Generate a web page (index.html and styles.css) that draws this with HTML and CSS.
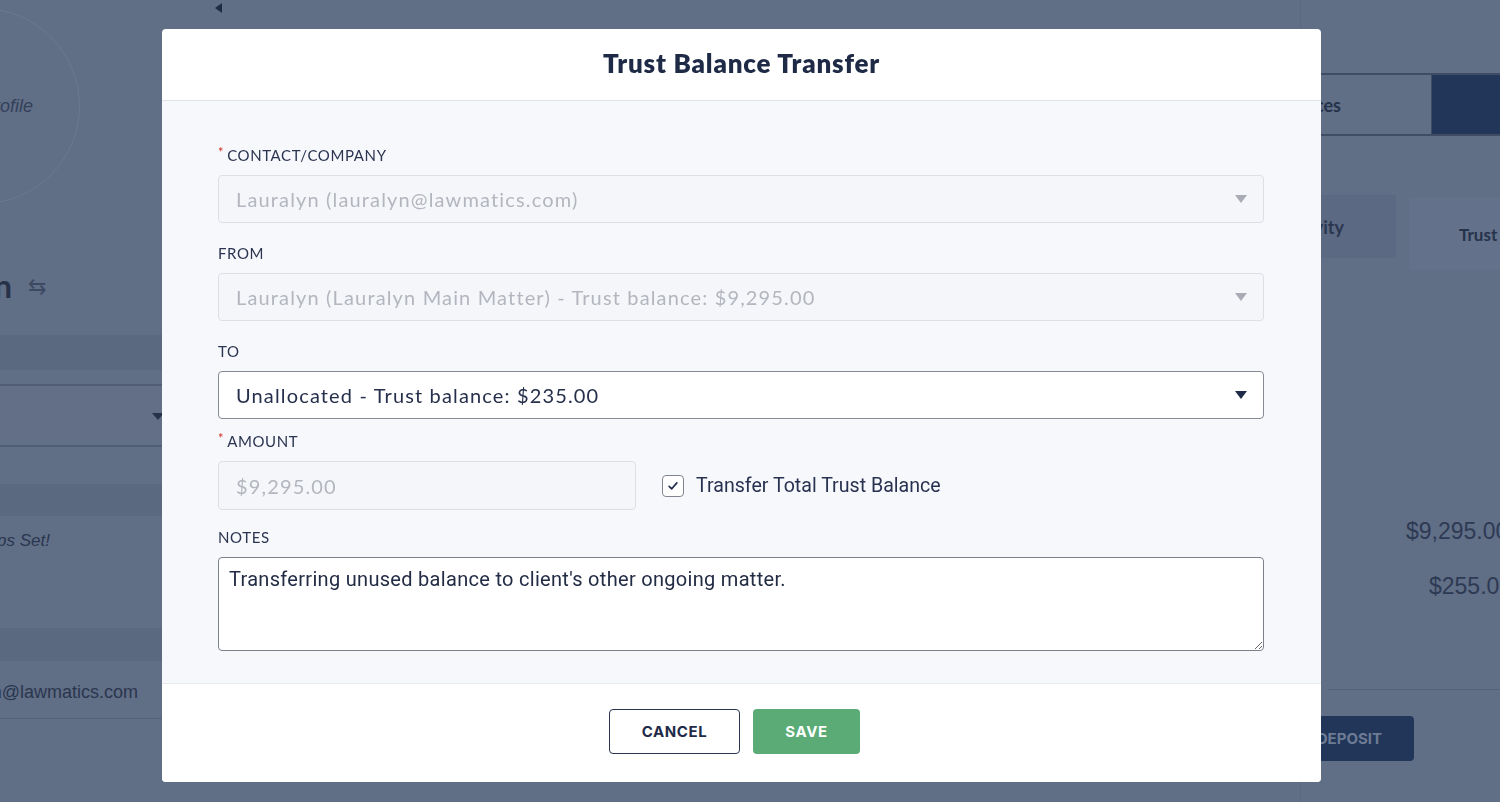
FILE: index.html
```html
<!DOCTYPE html>
<html lang="en">
<head>
<meta charset="utf-8">
<title>Trust Balance Transfer</title>
<link rel="stylesheet" href="styles.css">
</head>
<body>
<div class="page">
  <aside class="left-col">
    <div class="avatar"><span class="avatar-text">Upload Profile</span></div>
    <div class="contact-name"><span>Lauralyn</span><span class="swap">&#8646;</span></div>
    <div class="band band-a"></div>
    <div class="select-row"><span class="bg-caret"></span></div>
    <div class="band band-b"></div>
    <div class="steps"><span>No Steps Set!</span></div>
    <div class="band band-c"></div>
    <div class="email"><span>lauralyn@lawmatics.com</span></div>
    <div class="rule"></div>
  </aside>
  <main class="center-col">
    <span class="collapse"></span>
  </main>
  <aside class="right-col">
    <div class="tabs">
      <div class="tab tab-light"><span>Invoices</span></div>
      <div class="tab tab-dark"></div>
    </div>
    <div class="subtabs">
      <div class="subtab subtab-a"><span>Activity</span></div>
      <div class="subtab subtab-b">Trust</div>
    </div>
    <div class="amount amount-1">$9,295.00</div>
    <div class="amount amount-2">$255.00</div>
    <div class="right-rule"></div>
    <div class="deposit"><span>NEW DEPOSIT</span></div>
  </aside>
</div>

<div class="modal" role="dialog" aria-labelledby="modal-title">
  <header class="modal-header">
    <h1 id="modal-title" class="modal-title">Trust Balance Transfer</h1>
  </header>
  <section class="modal-body">
    <div class="field">
      <label class="label"><span class="req">*</span>CONTACT/COMPANY</label>
      <div class="select disabled"><span class="value">Lauralyn (lauralyn@lawmatics.com)</span><span class="caret"></span></div>
    </div>
    <div class="field">
      <label class="label">FROM</label>
      <div class="select disabled"><span class="value">Lauralyn (Lauralyn Main Matter) - Trust balance: $9,295.00</span><span class="caret"></span></div>
    </div>
    <div class="field field-to">
      <label class="label">TO</label>
      <div class="select active"><span class="value">Unallocated - Trust balance: $235.00</span><span class="caret"></span></div>
    </div>
    <div class="field field-amount">
      <label class="label"><span class="req">*</span>AMOUNT</label>
      <div class="amount-row">
        <div class="input disabled">$9,295.00</div>
        <label class="check">
          <span class="box"><svg viewBox="0 0 20 20" width="14" height="14"><path d="M4.5 10.5 L8.2 14 L15.5 5.5" fill="none" stroke="#1f2b48" stroke-width="2.4" stroke-linecap="round" stroke-linejoin="round"/></svg></span>
          <span class="check-text">Transfer Total Trust Balance</span>
        </label>
      </div>
    </div>
    <div class="field field-notes">
      <label class="label">NOTES</label>
      <textarea class="notes">Transferring unused balance to client's other ongoing matter.</textarea>
    </div>
  </section>
  <footer class="modal-footer">
    <button class="btn btn-cancel">CANCEL</button>
    <button class="btn btn-save">SAVE</button>
  </footer>
</div>
</body>
</html>
```

FILE: styles.css
```css
* { box-sizing: border-box; }
html, body { margin: 0; padding: 0; }
body {
  width: 1500px;
  height: 802px;
  overflow: hidden;
  background: #606e86;
  font-family: "Lato", "Noto Sans", sans-serif;
  color: #1f2b48;
}

/* ---------- dimmed page behind the modal ---------- */
.page {
  display: grid;
  grid-template-columns: 170px 1130px 200px;
  height: 802px;
}
.left-col {
  overflow: hidden;
  display: flex;
  flex-direction: column;
}
.avatar {
  width: 196px;
  height: 196px;
  margin: 8px 0 0 -116px;
  border-radius: 50%;
  border: 1.5px solid #6c798f;
  display: flex;
  align-items: center;
  justify-content: flex-end;
  padding: 0 46px 0 0;
  flex: none;
}
.avatar-text {
  font-family: "Liberation Sans", sans-serif;
  font-style: italic;
  font-size: 18px;
  color: #34405a;
  white-space: nowrap;
}
.contact-name {
  margin-top: 61px;
  height: 40px;
  display: flex;
  align-items: center;
  justify-content: flex-end;
  gap: 16px;
  padding-right: 124px;
  white-space: nowrap;
  font-size: 32px;
  font-weight: 700;
  color: #27324a;
}
.swap { font-size: 22px; font-weight: 400; color: #3d4962; }
.band { background: #5a6880; flex: none; }
.band-a { margin-top: 30px; height: 35px; }
.select-row {
  margin-top: 14px;
  height: 63px;
  border-top: 2px solid #4f5d75;
  border-bottom: 2px solid #4f5d75;
  background: #636f87;
  position: relative;
  flex: none;
}
.bg-caret {
  position: absolute;
  right: 6px;
  top: 27px;
  border-left: 6px solid transparent;
  border-right: 6px solid transparent;
  border-top: 7px solid #26324a;
}
.band-b { margin-top: 37px; height: 32px; }
.steps {
  margin-top: 15px;
  height: 20px;
  line-height: 20px;
  display: flex;
  justify-content: flex-end;
  padding-right: 120px;
  white-space: nowrap;
  font-family: "Liberation Sans", sans-serif;
  font-style: italic;
  font-size: 17px;
  color: #2b364e;
}
.steps span, .email span, .tab-light span, .subtab-a span, .deposit span { flex: none; }
.band-c { margin-top: 77px; height: 33px; }
.email {
  margin-top: 21px;
  height: 20px;
  line-height: 20px;
  display: flex;
  justify-content: flex-end;
  padding-right: 32px;
  white-space: nowrap;
  font-family: "Liberation Sans", sans-serif;
  font-size: 18px;
  color: #2b364e;
}
.rule { margin-top: 16px; border-top: 1px solid #55627a; }

.center-col { position: relative; }
.collapse {
  display: block;
  width: 0;
  height: 0;
  margin: 3px 0 0 45px;
  border-top: 5px solid transparent;
  border-bottom: 5px solid transparent;
  border-right: 7px solid #1f2b44;
}

.right-col {
  overflow: hidden;
  display: flex;
  flex-direction: column;
  border-left: 1px solid #5b6880;
}
.tabs {
  margin-top: 73px;
  height: 63px;
  display: flex;
  border-top: 2px solid #3f4c64;
  border-bottom: 2px solid #3f4c64;
  flex: none;
}
.tab-light {
  width: 131px;
  display: flex;
  align-items: center;
  justify-content: flex-end;
  padding-right: 90px;
  white-space: nowrap;
  font-size: 18px;
  font-weight: 700;
  color: #26324b;
  border-right: 1px solid #3f4c64;
}
.tab-dark { flex: 1; background: #22365a; }
.subtabs {
  margin-top: 59px;
  display: flex;
  align-items: flex-start;
  gap: 13px;
  flex: none;
}
.subtab-a {
  width: 95px;
  height: 63px;
  background: #5b6982;
  display: flex;
  align-items: center;
  justify-content: flex-end;
  padding-right: 52px;
  white-space: nowrap;
  font-size: 18px;
  font-weight: 700;
  color: #2b3750;
}
.subtab-b {
  flex: 1;
  height: 72px;
  margin-top: 3px;
  background: #63718a;
  padding: 26px 0 0 50px;
  white-space: nowrap;
  font-size: 17px;
  font-weight: 700;
  color: #26324b;
}
.amount {
  font-family: "Liberation Sans", sans-serif;
  font-size: 23px;
  color: #2e3a54;
  white-space: nowrap;
  height: 26px;
  line-height: 26px;
}
.amount-1 { margin-top: 248px; padding-left: 105px; }
.amount-2 { margin-top: 29px; padding-left: 128px; }
.right-rule { margin: 90px 0 0 27px; border-top: 1px solid #55627a; }
.deposit {
  margin-top: 26px;
  width: 113px;
  height: 45px;
  border-radius: 4px;
  background: #22365a;
  display: flex;
  align-items: center;
  justify-content: flex-end;
  padding-right: 32px;
  white-space: nowrap;
  font-family: "Inter", sans-serif;
  font-weight: 700;
  font-size: 15px;
  color: #6d7b95;
}

/* ---------- modal ---------- */
.modal {
  position: fixed;
  left: 162px;
  top: 29px;
  width: 1159px;
  height: 753px;
  background: #ffffff;
  border-radius: 4px;
  overflow: hidden;
  display: flex;
  flex-direction: column;
}
.modal-header {
  height: 72px;
  flex: none;
  border-bottom: 1px solid #dfe2e8;
  display: flex;
  align-items: center;
  justify-content: center;
  padding-bottom: 3px;
}
.modal-title {
  margin: 0;
  font-size: 26px;
  font-weight: 800;
  color: #1e2a46;
  letter-spacing: 0.8px;
}
.modal-body {
  flex: 1;
  background: #f7f8fc;
  padding: 44px 57px 0 56px;
  display: flex;
  flex-direction: column;
}
.field { display: flex; flex-direction: column; }
.field + .field { margin-top: 20px; }
.field-amount { margin-top: 12px !important; }
.field-notes { margin-top: 17px !important; }
.label {
  height: 20px;
  line-height: 20px;
  font-size: 15px;
  letter-spacing: 0.6px;
  color: #2a3450;
  margin-bottom: 10px;
}
.req {
  color: #d0342c;
  font-size: 13px;
  vertical-align: top;
  line-height: 14px;
  margin-right: 3px;
}
.select {
  height: 48px;
  border-radius: 4px;
  display: flex;
  align-items: center;
  justify-content: space-between;
  padding: 0 16px 0 17px;
  font-size: 20px;
  letter-spacing: 1.15px;
}
.select.disabled {
  background: #f5f6fa;
  border: 1px solid #dddfe5;
  color: #b3b6be;
}
.select.active {
  background: #ffffff;
  border: 1.5px solid #858a95;
  color: #26304c;
}
.caret {
  width: 0;
  height: 0;
  border-left: 6px solid transparent;
  border-right: 6px solid transparent;
  border-top: 8px solid #a9acb4;
}
.select.active .caret { border-top-color: #1f2b48; }
.amount-row { display: flex; align-items: center; gap: 26px; }
.input {
  width: 418px;
  height: 49px;
  border-radius: 4px;
  display: flex;
  align-items: center;
  padding-left: 17px;
  font-size: 20px;
  letter-spacing: 1.15px;
}
.input.disabled {
  background: #f5f6fa;
  border: 1px solid #dddfe5;
  color: #b3b6be;
}
.check { display: flex; align-items: center; gap: 12px; }
.box {
  width: 22px;
  height: 22px;
  border: 1.5px solid #80858f;
  border-radius: 4px;
  background: #fff;
  display: flex;
  align-items: center;
  justify-content: center;
}
.check-text {
  font-family: "Roboto", sans-serif;
  font-size: 19.6px;
  color: #283250;
}
.notes {
  display: block;
  width: 1046px;
  height: 94px;
  resize: vertical;
  border: 1.5px solid #7b808b;
  border-radius: 4px;
  background: #fff;
  padding: 9px 10px;
  font-family: "Roboto", sans-serif;
  font-size: 20px;
  letter-spacing: 0.3px;
  line-height: 24px;
  color: #232c45;
  outline: none;
}
.modal-footer {
  height: 99px;
  flex: none;
  border-top: 1px solid #e8eaef;
  background: #fff;
  display: flex;
  align-items: center;
  justify-content: center;
  gap: 13px;
  padding-right: 14px;
  padding-bottom: 3px;
}
.btn {
  height: 45px;
  border-radius: 4px;
  font-family: "Inter", sans-serif;
  font-size: 15px;
  font-weight: 700;
  letter-spacing: 0.6px;
  cursor: pointer;
}
.btn-cancel {
  width: 131px;
  background: #fff;
  border: 1.5px solid #2a3550;
  color: #1f2b48;
}
.btn-save {
  width: 107px;
  background: #5aab76;
  border: none;
  color: #fff;
}
```
